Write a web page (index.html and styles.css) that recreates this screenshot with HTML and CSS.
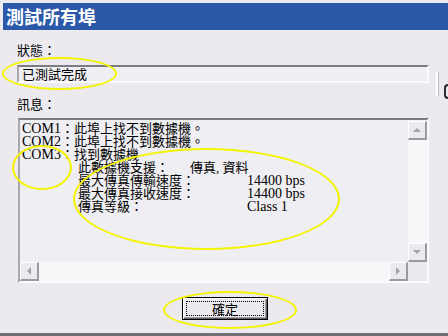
FILE: index.html
```html
<!DOCTYPE html>
<html lang="zh-TW">
<head>
    <meta charset="UTF-8">
    <meta name="viewport" content="width=device-width, initial-scale=1.0">
    <title>測試所有埠</title>
    <link rel="stylesheet" href="styles.css">
</head>
<body>
    <div class="window">
        <div class="titlebar">測試所有埠</div>

        <div class="content">
            <div class="label">狀態：</div>
            <div class="status-row">
                <div class="field">已測試完成</div>
                <div class="edge">
                    <span class="edge-line"></span>
                    <span class="edge-knob"></span>
                </div>
            </div>

            <div class="label label-msg">訊息：</div>
            <div class="memo">
                <div class="memo-text">
                    <div class="line"><span class="en">COM1</span>：此埠上找不到數據機。</div>
                    <div class="line"><span class="en">COM2</span>：此埠上找不到數據機。</div>
                    <div class="line"><span class="en">COM3</span>：找到數據機</div>
                    <div class="details">
                        <span class="key">此數據機支援：</span>
                        <span class="val-wide">傳真, 資料</span>
                        <span class="key key-long">最大傳真傳輸速度：</span>
                        <span class="val en">14400 bps</span>
                        <span class="key key-long">最大傳真接收速度：</span>
                        <span class="val en">14400 bps</span>
                        <span class="key key-long">傳真等級：</span>
                        <span class="val en">Class 1</span>
                    </div>
                </div>

                <!-- 垂直捲軸 -->
                <div class="vscroll">
                    <div class="sbtn"><span class="arrow arrow-up"></span></div>
                    <div class="track"></div>
                    <div class="sbtn"><span class="arrow arrow-down"></span></div>
                </div>

                <!-- 水平捲軸 -->
                <div class="hscroll">
                    <div class="sbtn"><span class="arrow arrow-left"></span></div>
                    <div class="track"></div>
                    <div class="sbtn"><span class="arrow arrow-right"></span></div>
                </div>
                <div class="corner"></div>
            </div>

            <div class="actions">
                <button class="btn-ok"><span class="focus">確定</span></button>
            </div>
        </div>

        <!-- 黃色標註圈 -->
        <div class="mark mark-status"></div>
        <div class="mark mark-com3"></div>
        <div class="mark mark-details"></div>
        <div class="mark mark-ok"></div>
    </div>
</body>
</html>
```

FILE: styles.css
```css
body {
    margin: 0;
    background: #eceaef;
    font-family: "Noto Sans CJK TC", "Liberation Sans", sans-serif;
    color: #000;
}

.window {
    position: relative;
    width: 448px;
    height: 336px;
    box-sizing: border-box;
    padding: 3px 0 0 3px;
    border-bottom: 3px solid #6f6f74;
    overflow: hidden;
}

.titlebar {
    height: 27px;
    background: #2b58a8;
    color: #fff;
    font-size: 18px;
    font-weight: 700;
    line-height: 27px;
    padding-left: 3px;
}

.content {
    padding: 12px 0 0 14px;
}

.label {
    font-size: 13px;
    line-height: 16px;
    height: 16px;
}

.label-msg {
    margin-top: 13px;
}

.status-row {
    display: flex;
    align-items: flex-start;
    height: 18px;
    margin-top: 7px;
}

.field {
    flex: none;
    width: 405px;
    height: 14px;
    border-top: 2px solid #7d7c82;
    border-left: 2px solid #a9a8ad;
    border-bottom: 2px solid #fbfbfd;
    border-right: 2px solid #fbfbfd;
    background: #efeef2;
    font-size: 13px;
    line-height: 14px;
    padding-left: 3px;
}

.edge {
    display: flex;
    margin-left: 7px;
    margin-top: 7px;
}

.edge-line {
    width: 2px;
    height: 24px;
    background: #fff;
    border-right: 1px solid #b8b7bc;
}

.edge-knob {
    width: 4px;
    height: 11px;
    margin-left: 5px;
    margin-top: 12px;
    border: 2px solid #2d2d30;
    border-right: none;
    border-radius: 4px 0 0 4px;
}

.memo {
    display: grid;
    grid-template-columns: 1fr 19px;
    grid-template-rows: 1fr 19px;
    width: 411px;
    height: 165px;
    box-sizing: border-box;
    margin: 6px 0 0 1px;
    border-top: 2px solid #7d7c82;
    border-left: 2px solid #a9a8ad;
    border-bottom: 2px solid #fbfbfd;
    border-right: 2px solid #fbfbfd;
    background: #efeef2;
}

.memo-text {
    min-height: 0;
    padding: 2px 0 0 2px;
    font-family: "Liberation Serif", "Noto Sans CJK TC", serif;
    font-size: 13px;
    line-height: 13px;
    overflow: hidden;
}

.en {
    font-size: 14px;
}

.line {
    height: 13px;
    white-space: nowrap;
}

.details {
    display: grid;
    grid-template-columns: 112px 57px auto;
    grid-auto-rows: 13px;
    margin-left: 56px;
    white-space: nowrap;
}

.key {
    grid-column: 1;
}

.key-long {
    grid-column: 1 / 3;
}

.val-wide {
    grid-column: 2 / -1;
}

.val {
    grid-column: 3;
}

.vscroll {
    display: flex;
    flex-direction: column;
    margin-top: 1px;
}

.hscroll {
    display: flex;
}

.track {
    flex: 1;
    background: #f7f7f9;
}

.corner {
    background: #eceaef;
}

.sbtn {
    width: 19px;
    height: 19px;
    box-sizing: border-box;
    background: #eceaef;
    border-top: 1px solid #fff;
    border-left: 1px solid #fff;
    border-right: 2px solid #9b9aa0;
    border-bottom: 2px solid #9b9aa0;
    display: flex;
    align-items: center;
    justify-content: center;
}

.arrow {
    width: 0;
    height: 0;
    border: 4px solid transparent;
}

.arrow-up {
    border-bottom-color: #a3a2a8;
    border-top-width: 0;
}

.arrow-down {
    border-top-color: #a3a2a8;
    border-bottom-width: 0;
}

.arrow-left {
    border-right-color: #a3a2a8;
    border-left-width: 0;
}

.arrow-right {
    border-left-color: #a3a2a8;
    border-right-width: 0;
}

.actions {
    display: flex;
    justify-content: center;
    width: 416px;
    margin-top: 14px;
}

.btn-ok {
    display: flex;
    width: 86px;
    height: 23px;
    padding: 0;
    border: 1px solid #000;
    background: #eceaef;
    box-shadow: inset 1px 1px 0 #fff, inset -1px -1px 0 #5f5e63, inset -2px -2px 0 #a3a2a8;
    font-family: "Noto Sans CJK TC", sans-serif;
    font-size: 13px;
    color: #000;
}

.focus {
    flex: 1;
    margin: 3px;
    border: 1px dotted #000;
    line-height: 13px;
}

.mark {
    position: absolute;
    border: 2px solid #f4f400;
    border-radius: 50%;
    box-sizing: border-box;
}

.mark-status {
    left: 2px;
    top: 57px;
    width: 115px;
    height: 33px;
}

.mark-com3 {
    left: 12px;
    top: 145px;
    width: 60px;
    height: 45px;
}

.mark-details {
    left: 73px;
    top: 148px;
    width: 267px;
    height: 102px;
}

.mark-ok {
    left: 163px;
    top: 291px;
    width: 134px;
    height: 38px;
}
```
